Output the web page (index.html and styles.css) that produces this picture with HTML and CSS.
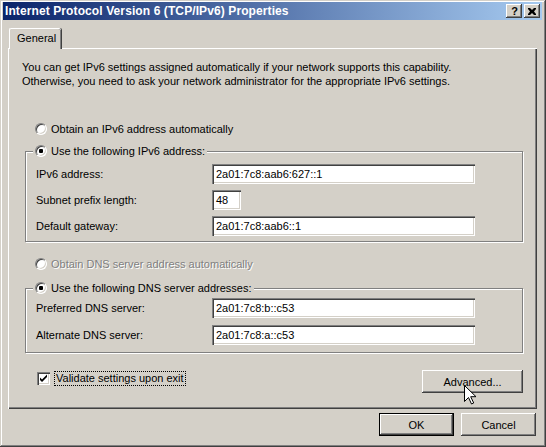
FILE: index.html
```html
<!DOCTYPE html>
<html>
<head>
<meta charset="utf-8">
<title>Internet Protocol Version 6 (TCP/IPv6) Properties</title>
<link rel="stylesheet" href="styles.css">
</head>
<body>
<div class="window">
  <div class="titlebar">
    <span class="title">Internet Protocol Version 6 (TCP/IPv6) Properties</span>
    <div class="tb-buttons">
      <span class="tb-btn help">?</span>
      <span class="tb-btn close">
        <svg width="8" height="7" viewBox="0 0 8 7"><path d="M0 0h2l2 2 2-2h2v1l-2 2.5 2 2.5v1h-2l-2-2-2 2h-2v-1l2-2.5-2-2.5z" fill="#000"/></svg>
      </span>
    </div>
  </div>

  <div class="tabs"><div class="tab">General</div></div>

  <div class="panel">
    <p class="intro">You can get IPv6 settings assigned automatically if your network supports this capability.<br>Otherwise, you need to ask your network administrator for the appropriate IPv6 settings.</p>

    <div class="radio-row first"><span class="radio"></span><span>Obtain an IPv6 address automatically</span></div>

    <div class="group g1">
      <div class="legend"><span class="radio checked"></span><span>Use the following IPv6 address:</span></div>
      <div class="rows">
        <div class="row"><span class="lbl">IPv6 address:</span><span class="field">2a01:7c8:aab6:627::1</span></div>
        <div class="row"><span class="lbl">Subnet prefix length:</span><span class="field short">48</span></div>
        <div class="row"><span class="lbl">Default gateway:</span><span class="field">2a01:7c8:aab6::1</span></div>
      </div>
    </div>

    <div class="radio-row disabled"><span class="radio"></span><span>Obtain DNS server address automatically</span></div>

    <div class="group g2">
      <div class="legend"><span class="radio checked"></span><span>Use the following DNS server addresses:</span></div>
      <div class="rows">
        <div class="row"><span class="lbl">Preferred DNS server:</span><span class="field">2a01:7c8:b::c53</span></div>
        <div class="row"><span class="lbl">Alternate DNS server:</span><span class="field">2a01:7c8:a::c53</span></div>
      </div>
    </div>

    <div class="bottom-row">
      <div class="check-row">
        <span class="checkbox"><svg width="9" height="9" viewBox="0 0 9 9"><path d="M1 3.5l2 2 5-5v2.5l-5 5-2-2z" fill="#000"/></svg></span>
        <span class="focus">Validate settings upon exit</span>
      </div>
      <span class="btn advanced">Advanced...</span>
    </div>
  </div>

  <div class="footer">
    <span class="btn default">OK</span>
    <span class="btn">Cancel</span>
  </div>

  <svg class="cursor" width="13" height="20" viewBox="0 0 13 20"><path d="M0.5 0.5v16l4-4 3 6.5 2.2-1-3-6.3h5.3z" fill="#fff" stroke="#000" stroke-width="1"/></svg>
</div>
</body>
</html>
```
FILE: styles.css
```css
html, body {
  margin: 0;
  padding: 0;
  background: #d4d0c8;
}
body {
  font-family: "Liberation Sans", Arial, sans-serif;
  font-size: 11px;
  color: #000;
}
.window {
  position: relative;
  width: 546px;
  height: 447px;
  box-sizing: border-box;
  padding: 2px 4px 3px 3px;
  background: #d4d0c8;
  box-shadow: inset -1px -1px #404040, inset 1px 1px #d4d0c8, inset -2px -2px #808080, inset 2px 2px #ffffff;
}
.titlebar {
  height: 18px;
  display: flex;
  align-items: center;
  padding: 0 2px;
  background: linear-gradient(to right, #0a246a, #a6caf0);
}
.title {
  flex: 1;
  color: #fff;
  font-weight: bold;
  font-size: 12px;
  letter-spacing: 0.1px;
  white-space: nowrap;
}
.tb-buttons {
  display: flex;
  gap: 2px;
}
.tb-btn {
  width: 16px;
  height: 14px;
  box-sizing: border-box;
  display: flex;
  align-items: center;
  justify-content: center;
  background: #d4d0c8;
  box-shadow: inset -1px -1px #404040, inset 1px 1px #ffffff, inset -2px -2px #808080, inset 2px 2px #d4d0c8;
}
.help {
  font-weight: bold;
  font-size: 11px;
  line-height: 14px;
  padding-left: 1px;
}
.close svg { display: block; }

.tabs {
  margin-top: 8px;
  height: 20px;
  padding-left: 6px;
}
.tab {
  position: relative;
  z-index: 1;
  width: 52px;
  height: 21px;
  box-sizing: border-box;
  padding: 3px 0 0 7px;
  background: #d4d0c8;
  border-top: 1px solid #fff;
  border-left: 1px solid #fff;
  border-top-left-radius: 2px;
  border-top-right-radius: 2px;
  box-shadow: inset -1px 0 #808080, 1px 0 #404040;
}
.panel {
  margin-left: 5px;
  width: 529px;
  height: 361px;
  box-sizing: border-box;
  border-top: 1px solid #fff;
  border-left: 1px solid #fff;
  padding: 11px 13px 0 13px;
  box-shadow: inset -1px -1px #404040, inset -2px -2px #808080;
}
.intro {
  margin: 0;
  line-height: 14px;
}
.radio-row {
  display: flex;
  align-items: center;
  height: 14px;
  gap: 4px;
  margin-left: 13px;
}
.radio-row.first { margin-top: 34px; }
.radio-row.disabled {
  margin-top: 15px;
  color: #808080;
  text-shadow: 1px 1px #fff;
}
.radio {
  position: relative;
  width: 12px;
  height: 12px;
  box-sizing: border-box;
  border-radius: 50%;
  background: #fff;
  border: 1px solid;
  border-color: #808080 #ffffff #ffffff #808080;
  box-shadow: inset 1px 1px #404040, inset -1px -1px #d4d0c8;
  flex: none;
}
.radio.checked::after {
  content: "";
  position: absolute;
  left: 3px;
  top: 3px;
  width: 4px;
  height: 4px;
  border-radius: 1px;
  background: #000;
}
.group {
  margin: 15px 1px 0 3px;
  border: 1px solid #808080;
  box-shadow: 1px 1px #fff, inset 1px 1px #fff;
  padding: 0 0 5px 10px;
}
.g2 { margin-top: 17px; padding-bottom: 7px; }
.legend {
  display: flex;
  align-items: center;
  gap: 4px;
  width: fit-content;
  height: 14px;
  margin: -8px 0 0 -3px;
  padding: 0 2px;
  background: #d4d0c8;
}
.rows {
  display: flex;
  flex-direction: column;
  gap: 6px;
  margin-top: 6px;
}
.g2 .rows { gap: 7px; margin-top: 3px; }
.row {
  display: flex;
  align-items: center;
  height: 20px;
}
.lbl {
  width: 176px;
  flex: none;
}
.field {
  width: 263px;
  height: 20px;
  box-sizing: border-box;
  padding: 0 4px;
  line-height: 20px;
  background: #fff;
  box-shadow: inset 1px 1px #808080, inset 2px 2px #404040, inset -1px -1px #ffffff, inset -2px -2px #d4d0c8;
}
.field.short { width: 29px; }
.bottom-row {
  margin: 17px 1px 0 0;
  display: flex;
  align-items: flex-start;
  justify-content: space-between;
}
.check-row {
  display: flex;
  align-items: center;
  gap: 5px;
  margin: 2px 0 0 15px;
}
.checkbox {
  width: 13px;
  height: 13px;
  box-sizing: border-box;
  display: flex;
  align-items: center;
  justify-content: center;
  background: #fff;
  box-shadow: inset 1px 1px #808080, inset 2px 2px #404040, inset -1px -1px #ffffff, inset -2px -2px #d4d0c8;
}
.checkbox svg { display: block; }
.focus {
  outline: 1px dotted #000;
  padding: 0 1px;
  line-height: 13px;
}
.btn {
  width: 75px;
  height: 23px;
  box-sizing: border-box;
  display: flex;
  align-items: center;
  justify-content: center;
  background: #d4d0c8;
  box-shadow: inset -1px -1px #404040, inset 1px 1px #ffffff, inset -2px -2px #808080, inset 2px 2px #d4d0c8;
}
.btn.advanced { width: 101px; }
.btn.default {
  border: 1px solid #000;
  box-shadow: inset -1px -1px #404040, inset 1px 1px #ffffff, inset -2px -2px #808080;
}
.footer {
  display: flex;
  justify-content: flex-end;
  gap: 7px;
  margin-top: 4px;
  padding-right: 6px;
}
.cursor {
  position: absolute;
  left: 464px;
  top: 385px;
}
```
